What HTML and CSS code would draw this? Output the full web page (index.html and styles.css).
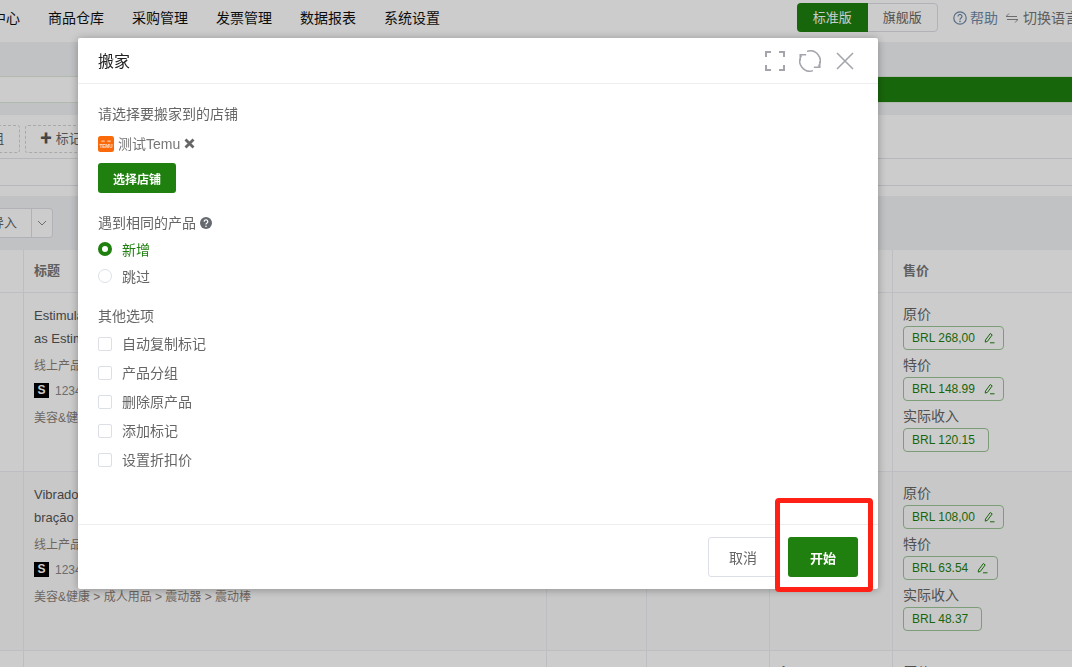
FILE: index.html
```html
<!DOCTYPE html>
<html lang="zh-CN">
<head>
<meta charset="utf-8">
<title>搬家</title>
<link rel="stylesheet" href="styles.css">
</head>
<body>
<div class="page">
  <header class="topbar">
    <nav class="nav">
      <a>中心</a><a>商品仓库</a><a>采购管理</a><a>发票管理</a><a>数据报表</a><a>系统设置</a>
    </nav>
    <div class="top-right">
      <div class="edition"><span class="ed on">标准版</span><span class="ed">旗舰版</span></div>
      <svg class="q-icon" viewBox="0 0 14 14"><circle cx="7" cy="7" r="6.2" fill="none" stroke="currentColor" stroke-width="1.2"/><path d="M5 5.4a2 2 0 1 1 3.1 1.7c-.7.5-1.1.8-1.1 1.6" fill="none" stroke="currentColor" stroke-width="1.2"/><circle cx="7" cy="10.4" r=".8" fill="currentColor"/></svg>
      <span class="help">帮助</span>
      <svg class="swap" viewBox="0 0 12 10"><path d="M0 3.5h11M0 3.5l3-3M12 6.5H1M12 6.5l-3 3" fill="none" stroke="currentColor"/></svg>
      <span class="lang">切换语言</span>
    </div>
  </header>
  <div class="band"></div>
  <div class="progress"><div class="progress-rest"></div><div class="progress-fill"></div></div>
  <div class="gap"></div>
  <section class="card">
    <div class="tags">
      <span class="tag tag-a">分组</span>
      <span class="tag tag-b"><b>✚</b> 标记</span>
    </div>
    <div class="filter-line"></div>
    <div class="card-foot"></div>
  </section>
  <div class="toolbar">
    <div class="split"><span class="split-text">导入</span><span class="split-arrow"><svg viewBox="0 0 10 6"><path d="M1 1l4 4 4-4" fill="none" stroke="currentColor"/></svg></span></div>
  </div>
  <div class="thead grid">
    <div class="cell"></div><div class="cell th">标题</div><div class="cell"></div><div class="cell"></div><div class="cell"></div><div class="cell th">售价</div>
  </div>
  <div class="row grid">
    <div class="cell"></div>
    <div class="cell title-cell">
      <div class="name">Estimulador de Clitóris</div>
      <div class="name">as Estimulador</div>
      <div class="kind">线上产品</div>
      <div class="sku"><span class="s-badge">S</span><span>1234</span></div>
      <div class="cat">美容&amp;健康 &gt; 成人用品 &gt; 震动器</div>
    </div>
    <div class="cell"></div><div class="cell"></div><div class="cell"></div>
    <div class="cell price-cell">
      <div class="plabel">原价</div><div class="pbox w101">BRL 268,00<svg class="pen" viewBox="0 0 12 12"><path d="M2.5 8l4.8-6.5 1.9 1.4-4.8 6.5-2.2.7zM7 10.8h4.5" fill="none" stroke="currentColor"/></svg></div>
      <div class="plabel">特价</div><div class="pbox w101">BRL 148.99<svg class="pen" viewBox="0 0 12 12"><path d="M2.5 8l4.8-6.5 1.9 1.4-4.8 6.5-2.2.7zM7 10.8h4.5" fill="none" stroke="currentColor"/></svg></div>
      <div class="plabel">实际收入</div><div class="pbox w86">BRL 120.15</div>
    </div>
  </div>
  <div class="row row-alt grid">
    <div class="cell"></div>
    <div class="cell title-cell">
      <div class="name">Vibrador de Vi</div>
      <div class="name">bração</div>
      <div class="kind">线上产品</div>
      <div class="sku"><span class="s-badge">S</span><span>1234</span></div>
      <div class="cat">美容&amp;健康 &gt; 成人用品 &gt; 震动器 &gt; 震动棒</div>
    </div>
    <div class="cell"></div><div class="cell"></div><div class="cell"></div>
    <div class="cell price-cell">
      <div class="plabel">原价</div><div class="pbox w101">BRL 108,00<svg class="pen" viewBox="0 0 12 12"><path d="M2.5 8l4.8-6.5 1.9 1.4-4.8 6.5-2.2.7zM7 10.8h4.5" fill="none" stroke="currentColor"/></svg></div>
      <div class="plabel">特价</div><div class="pbox w95">BRL 63.54<svg class="pen" viewBox="0 0 12 12"><path d="M2.5 8l4.8-6.5 1.9 1.4-4.8 6.5-2.2.7zM7 10.8h4.5" fill="none" stroke="currentColor"/></svg></div>
      <div class="plabel">实际收入</div><div class="pbox w79">BRL 48.37</div>
    </div>
  </div>
  <div class="row grid">
    <div class="cell"></div><div class="cell"></div><div class="cell"></div><div class="cell"></div><div class="cell qty">1</div>
    <div class="cell price-cell"><div class="plabel">原价</div></div>
  </div>
</div>

<div class="overlay"></div>

<div class="modal">
  <div class="modal-head">
    <span class="modal-title">搬家</span>
    <div class="modal-tools">
      <svg class="tool t-full" viewBox="0 0 20 20"><path d="M1 6V1h5M14 1h5v5M19 14v5h-5M6 19H1v-5" fill="none" stroke="currentColor" stroke-width="2"/></svg>
      <svg class="tool t-ref" viewBox="0 0 22 22"><path d="M8 1.4A10 10 0 0 1 19.6 16.3M20.8 11.2v6h-6M14 20.6A10 10 0 0 1 2.4 5.7M1.2 10.8v-6h6" fill="none" stroke="currentColor" stroke-width="1.5"/></svg>
      <svg class="tool t-close" viewBox="0 0 18 18"><path d="M1 1l16 16M17 1L1 17" fill="none" stroke="currentColor" stroke-width="1.6"/></svg>
    </div>
  </div>
  <div class="modal-body">
    <div class="sec-title">请选择要搬家到的店铺</div>
    <div class="store">
      <svg class="temu" viewBox="0 0 16 16"><rect width="16" height="16" rx="2.5" fill="#fb6a0a"/><path d="M3 5.2h4M9 5.2h4M5 4.2v2M11 4.2v2" stroke="#ffd9bd" stroke-width=".7" fill="none"/><text x="8" y="11.8" text-anchor="middle" font-size="4.6" font-weight="700" fill="#ffe9da" font-family="Liberation Sans">TEMU</text></svg>
      <span class="store-name">测试Temu</span>
      <svg class="x-mark" viewBox="0 0 11 11"><path d="M1.5 1.5l8 8M9.5 1.5l-8 8" stroke="currentColor" stroke-width="2.8" fill="none"/></svg>
    </div>
    <button class="btn-select">选择店铺</button>
    <div class="sec-title same">遇到相同的产品
      <svg class="tip" viewBox="0 0 12 12"><circle cx="6" cy="6" r="6" fill="#666a70"/><path d="M4.2 4.7a1.8 1.8 0 1 1 2.8 1.4c-.7.4-1 .7-1 1.3" fill="none" stroke="#fff" stroke-width="1.2"/><circle cx="6" cy="9.2" r=".8" fill="#fff"/></svg>
    </div>
    <label class="opt radio-line on"><span class="radio checked"></span>新增</label>
    <label class="opt radio-line"><span class="radio"></span>跳过</label>
    <div class="sec-title other">其他选项</div>
    <label class="opt check-line"><span class="check"></span>自动复制标记</label>
    <label class="opt check-line"><span class="check"></span>产品分组</label>
    <label class="opt check-line"><span class="check"></span>删除原产品</label>
    <label class="opt check-line"><span class="check"></span>添加标记</label>
    <label class="opt check-line"><span class="check"></span>设置折扣价</label>
  </div>
  <div class="modal-foot">
    <button class="btn-cancel">取消</button>
    <button class="btn-start">开始</button>
  </div>
</div>

<div class="highlight"></div>
</body>
</html>
```
FILE: styles.css
```css
* { box-sizing: border-box; }
html, body { margin: 0; padding: 0; height: 667px; overflow: hidden; }
body {
  font-family: "Liberation Sans", "Noto Sans CJK SC", sans-serif;
  font-size: 14px;
  color: #333;
  background: #fff;
}
.page { width: 1072px; height: 667px; overflow: hidden; }

/* top bar */
.topbar { height: 42px; display: flex; align-items: center; justify-content: space-between; background: #fff; }
.nav { display: flex; gap: 28px; margin-left: -8px; padding-bottom: 9px; color: #111; }
.top-right { display: flex; align-items: center; color: #7a7d82; margin-top: -7px; overflow: hidden; width: 275px; flex: none; white-space: nowrap; }
.edition { display: flex; width: 141px; height: 29px; border: 1px solid #dcdfe6; border-radius: 4px; flex: none; }
.ed { width: 70px; text-align: center; line-height: 27px; font-size: 13px; color: #666; }
.ed.on { width: 71px; margin: -1px 0 -1px -1px; line-height: 29px; background: #1f800f; color: #fff; border-radius: 4px 0 0 4px; }
.q-icon { width: 14px; height: 14px; margin-left: 15px; color: #6f8aa8; flex: none; }
.help { margin-left: 3px; margin-top: -1px; color: #6f8aa8; }
.swap { width: 12px; height: 10px; margin-left: 8px; color: #888; flex: none; }
.lang { margin-left: 5px; margin-top: -1px; color: #777; }

.band { height: 34px; background: #f2f3f6; }
.progress { height: 27px; display: flex; border-top: 1px solid #dfe9dc; border-bottom: 1px solid #dfe9dc; }
.progress-rest { width: 600px; background: #fff; }
.progress-fill { flex: 1; background: #1f800f; }
.gap { height: 12px; background: #f2f3f6; }

.card { height: 81px; background: #fff; display: flex; flex-direction: column; }
.tags { height: 43px; display: flex; gap: 5px; padding-top: 10px; margin-left: -30px; }
.tag { height: 28px; border: 1px dashed #d4d4d8; border-radius: 3px; line-height: 26px; font-size: 13px; color: #666; padding: 0 14px; white-space: nowrap; }
.tag-a { width: 50px; text-align: right; padding: 0 15px 0 0; }
.tag-b { width: 120px; }
.tag-b b { font-size: 12px; color: #555; }
.filter-line { height: 28px; border-top: 1px solid #e4e5ea; border-bottom: 1px solid #e4e5ea; }
.card-foot { flex: 1; }

.toolbar { height: 54px; background: #f2f3f6; padding-top: 12px; }
.split { width: 53px; height: 30px; display: flex; border: 1px solid #dcdfe6; border-left: 0; border-radius: 0 4px 4px 0; background: #fff; font-size: 13px; color: #666; }
.split-text { width: 32px; line-height: 28px; text-align: right; padding-right: 14px; overflow: hidden; white-space: nowrap; direction: rtl; border-right: 1px solid #dcdfe6; }
.split-arrow { flex: 1; display: flex; align-items: center; justify-content: center; color: #888; }
.split-arrow svg { width: 10px; height: 6px; }

/* table */
.grid { display: grid; grid-template-columns: 23px 523px 100px 123px 123px 1fr; background: #fff; border-bottom: 1px solid #eceef3; }
.thead { height: 43px; }
.row { height: 179px; }
.row-alt { background: #fbfbfb; }
.cell { border-left: 1px solid #eceef3; min-width: 0; }
.cell:first-child { border-left: 0; }
.th { padding-left: 10px; line-height: 42px; font-size: 13px; font-weight: 700; color: #777; }
.title-cell { padding: 11px 0 0 10px; overflow: hidden; white-space: nowrap; }
.name { height: 23px; line-height: 23px; font-size: 13px; color: #555; }
.kind { margin-top: 7px; height: 18px; line-height: 18px; font-size: 12px; color: #8b7f75; }
.sku { margin-top: 8px; height: 15px; display: flex; align-items: center; gap: 6px; font-size: 12px; color: #888; }
.s-badge { width: 15px; height: 15px; background: #000; color: #fff; font-size: 12px; font-weight: 700; text-align: center; line-height: 15px; }
.cat { margin-top: 11px; height: 18px; line-height: 18px; font-size: 12px; color: #8a7f78; }
.price-cell { padding: 11px 0 0 10px; }
.plabel { height: 20px; line-height: 20px; font-size: 14px; color: #666; }
.pbox { height: 24px; margin: 2px 0 5px; border: 1px solid #9dc497; border-radius: 4px; padding-left: 8px; line-height: 22px; font-size: 12px; color: #1f800f; display: flex; align-items: center; }
.pen { width: 12px; height: 12px; margin-left: 8px; color: #1f800f; flex: none; }
.w101 { width: 101px; }
.w95 { width: 95px; }
.w86 { width: 86px; }
.w79 { width: 79px; }
.qty { padding: 12px 0 0 10px; font-size: 13px; color: #666; }

/* overlay & modal */
.overlay { position: fixed; inset: 0; background: rgba(0, 0, 0, .2); }
.modal { position: fixed; left: 78px; top: 38px; width: 800px; height: 551px; background: #fff; border-radius: 2px; box-shadow: 0 1px 10px rgba(0, 0, 0, .3); display: flex; flex-direction: column; }
.modal-head { height: 46px; flex: none; display: flex; align-items: center; justify-content: space-between; padding: 0 24px 0 20px; border-bottom: 1px solid #eeeeee; }
.modal-title { font-size: 16px; color: #222; margin-top: -1px; }
.modal-tools { display: flex; align-items: center; color: #a3a5ab; }
.tool { flex: none; }
.t-full { width: 20px; height: 20px; }
.t-ref { width: 22px; height: 22px; margin-left: 14px; }
.t-close { width: 18px; height: 18px; margin-left: 15px; }

.modal-body { flex: 1; padding: 20px 20px 0; color: #666; }
.sec-title { height: 20px; line-height: 20px; }
.store { margin-top: 9px; height: 20px; display: flex; align-items: center; }
.temu { width: 16px; height: 16px; margin-top: 1px; }
.store-name { margin-left: 4px; color: #777; }
.x-mark { width: 11px; height: 11px; margin-left: 4px; color: #666; margin-top: 1px; }
.btn-select { display: block; margin-top: 10px; width: 78px; height: 30px; border: 0; border-radius: 3px; background: #1f800f; color: #fff; font: 700 12px "Liberation Sans", "Noto Sans CJK SC", sans-serif; }
.same { margin-top: 20px; display: flex; align-items: center; gap: 4px; }
.tip { width: 12px; height: 12px; }
.opt { display: flex; align-items: center; gap: 10px; height: 20px; color: #666; }
.radio-line { margin-top: 7px; }
.same + .radio-line { margin-top: 6px; }
.radio-line.on { color: #1f800f; }
.radio { width: 14px; height: 14px; border: 1px solid #dcdfe6; border-radius: 50%; background: #fff; }
.radio.checked { border: 4.5px solid #1f800f; }
.other { margin-top: 20px; }
.check-line { margin-top: 9px; }
.other + .check-line { margin-top: 7px; }
.check { width: 14px; height: 14px; margin-top: 2px; border: 1px solid #dcdfe6; border-radius: 2px; background: #fff; }

.modal-foot { height: 65px; flex: none; border-top: 1px solid #eeeeee; display: flex; justify-content: flex-end; gap: 10px; padding: 12px 20px 0; }
.btn-cancel, .btn-start { width: 70px; height: 40px; border-radius: 3px; font: 13px "Liberation Sans", "Noto Sans CJK SC", sans-serif; }
.btn-cancel { background: #fff; border: 1px solid #dcdfe6; color: #666; font-size: 14px; }
.btn-start { background: #1f800f; border: 0; color: #fff; font-weight: 700; }

.highlight { position: fixed; left: 775px; top: 498px; width: 98px; height: 94px; border: 5px solid #ff2116; border-radius: 4px; }
```
